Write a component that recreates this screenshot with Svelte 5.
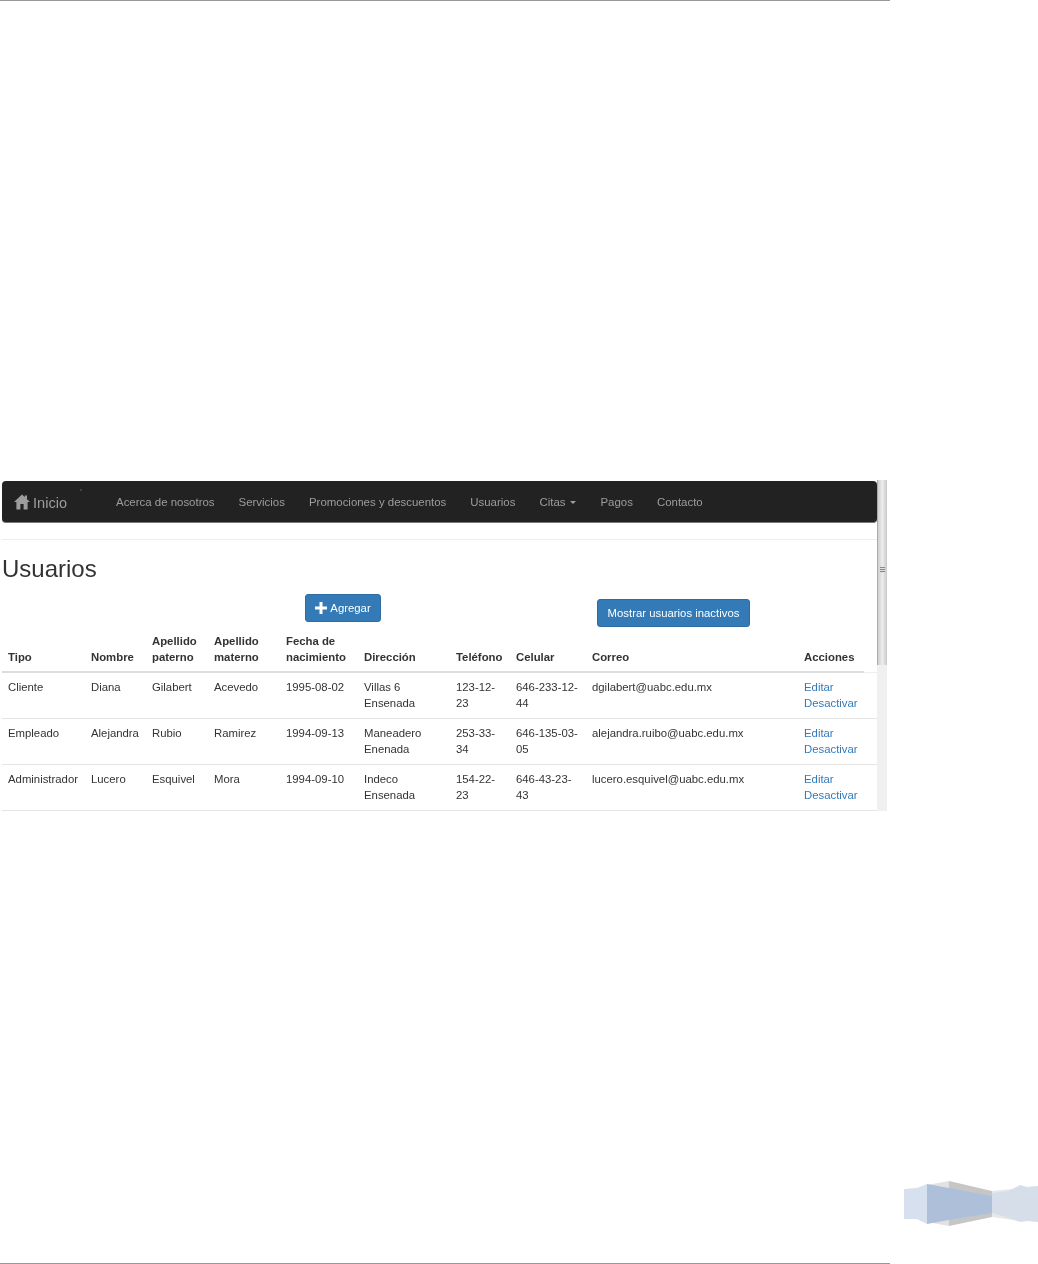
<script>
  const nav = ['Acerca de nosotros', 'Servicios', 'Promociones y descuentos', 'Usuarios', 'Citas', 'Pagos', 'Contacto'];
  const heads = ['Tipo', 'Nombre', 'Apellido paterno', 'Apellido materno', 'Fecha de nacimiento', 'Dirección', 'Teléfono', 'Celular', 'Correo', 'Acciones'];
  const users = [
    ['Cliente', 'Diana', 'Gilabert', 'Acevedo', '1995-08-02', 'Villas 6 Ensenada', '123-12-23', '646-233-12-44', 'dgilabert@uabc.edu.mx'],
    ['Empleado', 'Alejandra', 'Rubio', 'Ramirez', '1994-09-13', 'Maneadero Enenada', '253-33-34', '646-135-03-05', 'alejandra.ruibo@uabc.edu.mx'],
    ['Administrador', 'Lucero', 'Esquivel', 'Mora', '1994-09-10', 'Indeco Ensenada', '154-22-23', '646-43-23-43', 'lucero.esquivel@uabc.edu.mx']
  ];
</script>

<div class="page">
  <div class="rule"></div>

  <div class="shot">
    <div class="content">
      <nav class="navbar">
        <a class="brand" href="#inicio">
          <svg width="16" height="16" viewBox="0 0 16 16"><path d="M8 .5 0 8h2.400v7.500h4V10h3.200v5.500h4V8H16l-3-2.800V1.500h-2.200v1.600z" fill="#9d9d9d" /></svg>
          <span>Inicio</span>
        </a>
        <ul>
          {#each nav as item}
            <li>{item}{#if item === 'Citas'}<span class="caret"></span>{/if}</li>
          {/each}
        </ul>
      </nav>

      <div class="header"><h1>Usuarios</h1></div>

      <div class="actions">
        <button class="add">
          <svg width="12" height="12" viewBox="0 0 12 12"><path d="M4.500 0h3v4.500H12v3H7.500V12h-3V7.500H0v-3h4.500z" fill="#fff" /></svg>
          Agregar
        </button>
        <button class="inactive">Mostrar usuarios inactivos</button>
      </div>

      <table>
        <thead>
          <tr>
            {#each heads as head}<th>{head}</th>{/each}
            <th></th>
          </tr>
        </thead>
        <tbody>
          {#each users as user}
            <tr>
              {#each user as cell}<td>{cell}</td>{/each}
              <td><a href="#editar">Editar</a><br /><a href="#desactivar">Desactivar</a></td>
              <td></td>
            </tr>
          {/each}
        </tbody>
      </table>
    </div>

    <div class="scrollbar">
      <div class="thumb"><span></span></div>
    </div>
  </div>

  <div class="bottom">
    <svg width="134" height="46" viewBox="904 1181 134 46">
      <!-- grey folded band behind the blue one -->
      <polygon points="927,1185 949,1181 949,1226 927,1222" fill="#e2e2e2" />
      <polygon points="949,1181 992,1191 992,1217 949,1226" fill="#c6c6c6" />
      <polygon points="992,1191 1020,1188 1020,1221 992,1217" fill="#e8e8e6" />
      <!-- blue band -->
      <polygon points="904,1189 917,1188 927,1184 927,1224 917,1219 904,1219" fill="#d6e0ee" />
      <polygon points="927,1184 949,1188 992,1196 992,1213 949,1220 927,1224" fill="#aec0d9" />
      <polygon points="992,1193 1009,1191 1020,1185 1027,1187 1038,1186 1038,1222 1027,1221 1020,1222 1009,1218 992,1213" fill="#d5dee9" />
    </svg>
  </div>

  <div class="rule"></div>
</div>

<style>
  :global(body) {
    margin: 0;
    background: #fff;
  }

  .page {
    width: 1038px;
    height: 1264px;
    display: flex;
    flex-direction: column;
    font-family: "Liberation Sans", Arial, sans-serif;
    font-size: 11.35px;
    line-height: 16px;
    color: #333;
    overflow: hidden;
  }

  .rule {
    width: 890px;
    height: 1px;
    background: #999;
    flex: none;
  }

  .shot {
    display: flex;
    width: 885px;
    height: 331px;
    margin: 479px 0 0 2px;
    flex: none;
    filter: blur(0.3px);
  }

  .content {
    width: 875px;
    flex: none;
  }

  /* navbar */
  .navbar {
    position: relative;
    display: flex;
    align-items: center;
    height: 41px;
    margin-top: 1px;
    background: #222;
    border-bottom: 1px solid #777;
    border-radius: 4px;
    color: #9d9d9d;
  }

  .navbar::after {
    content: '';
    position: absolute;
    left: 78px;
    top: 8px;
    width: 2px;
    height: 2px;
    background: #444;
  }

  .brand {
    display: flex;
    align-items: center;
    gap: 3px;
    width: 114px;
    padding-left: 12px;
    box-sizing: border-box;
    font-size: 14.6px;
    color: #9d9d9d;
    text-decoration: none;
  }

  .brand span {
    padding-top: 2px;
  }

  ul {
    display: flex;
    gap: 24px;
    list-style: none;
    margin: 0;
    padding: 0;
    font-size: 11.45px;
  }

  .caret {
    display: inline-block;
    margin-left: 5px;
    vertical-align: middle;
    border-top: 3px solid #9d9d9d;
    border-left: 3px solid transparent;
    border-right: 3px solid transparent;
  }

  .header {
    margin-top: 16px;
    border-top: 1px solid #eee;
  }

  h1 {
    margin: 0;
    padding-top: 15px;
    font-size: 24px;
    font-weight: 400;
    line-height: 28px;
  }

  /* buttons */
  .actions {
    display: flex;
    align-items: flex-start;
    padding: 11px 0 0 303px;
    height: 39px;
  }

  button {
    display: flex;
    align-items: center;
    justify-content: center;
    height: 28px;
    padding: 0;
    background: #337ab7;
    border: 1px solid #2e6da4;
    border-radius: 3px;
    font: inherit;
    color: #fff;
  }

  .add {
    gap: 3px;
    width: 76px;
  }

  .inactive {
    width: 153px;
    margin: 5px 0 0 216px;
  }

  /* table */
  table {
    width: 875px;
    table-layout: fixed;
    border-collapse: collapse;
  }

  th {
    padding: 0 6px 6px;
    border-bottom: 2px solid #ddd;
    text-align: left;
    vertical-align: bottom;
    font-weight: 700;
  }

  th:last-child {
    border-bottom: 1px solid #eee;
  }

  td {
    padding: 6px 6px 7px;
    border-bottom: 1px solid #e4e4e4;
    vertical-align: top;
  }

  th:nth-child(1) { width: 71px; }
  th:nth-child(2) { width: 49px; }
  th:nth-child(3) { width: 50px; }
  th:nth-child(4) { width: 60px; }
  th:nth-child(5) { width: 66px; }
  th:nth-child(6) { width: 80px; }
  th:nth-child(7) { width: 48px; }
  th:nth-child(8) { width: 64px; }
  th:nth-child(9) { width: 200px; }
  th:nth-child(10) { width: 54px; }
  th:nth-child(11) { padding: 0; width: 13px; }

  td a {
    color: #337ab7;
    text-decoration: none;
  }

  /* window scrollbar */
  .scrollbar {
    width: 10px;
    flex: none;
    background: #f0f0f0;
  }

  .thumb {
    display: flex;
    align-items: center;
    justify-content: center;
    height: 185px;
    box-sizing: border-box;
    border-left: 1px solid #aaa;
    background: linear-gradient(90deg, #d0d0d0, #ececec 50%, #c8c8c8);
  }

  .thumb span {
    width: 5px;
    height: 6px;
    margin-bottom: 6px;
    background: repeating-linear-gradient(#8a8a8a 0 1px, #ddd 1px 2px);
  }

  .bottom {
    flex: 1;
    display: flex;
    justify-content: flex-end;
    align-items: flex-end;
    padding-bottom: 36px;
  }
</style>
